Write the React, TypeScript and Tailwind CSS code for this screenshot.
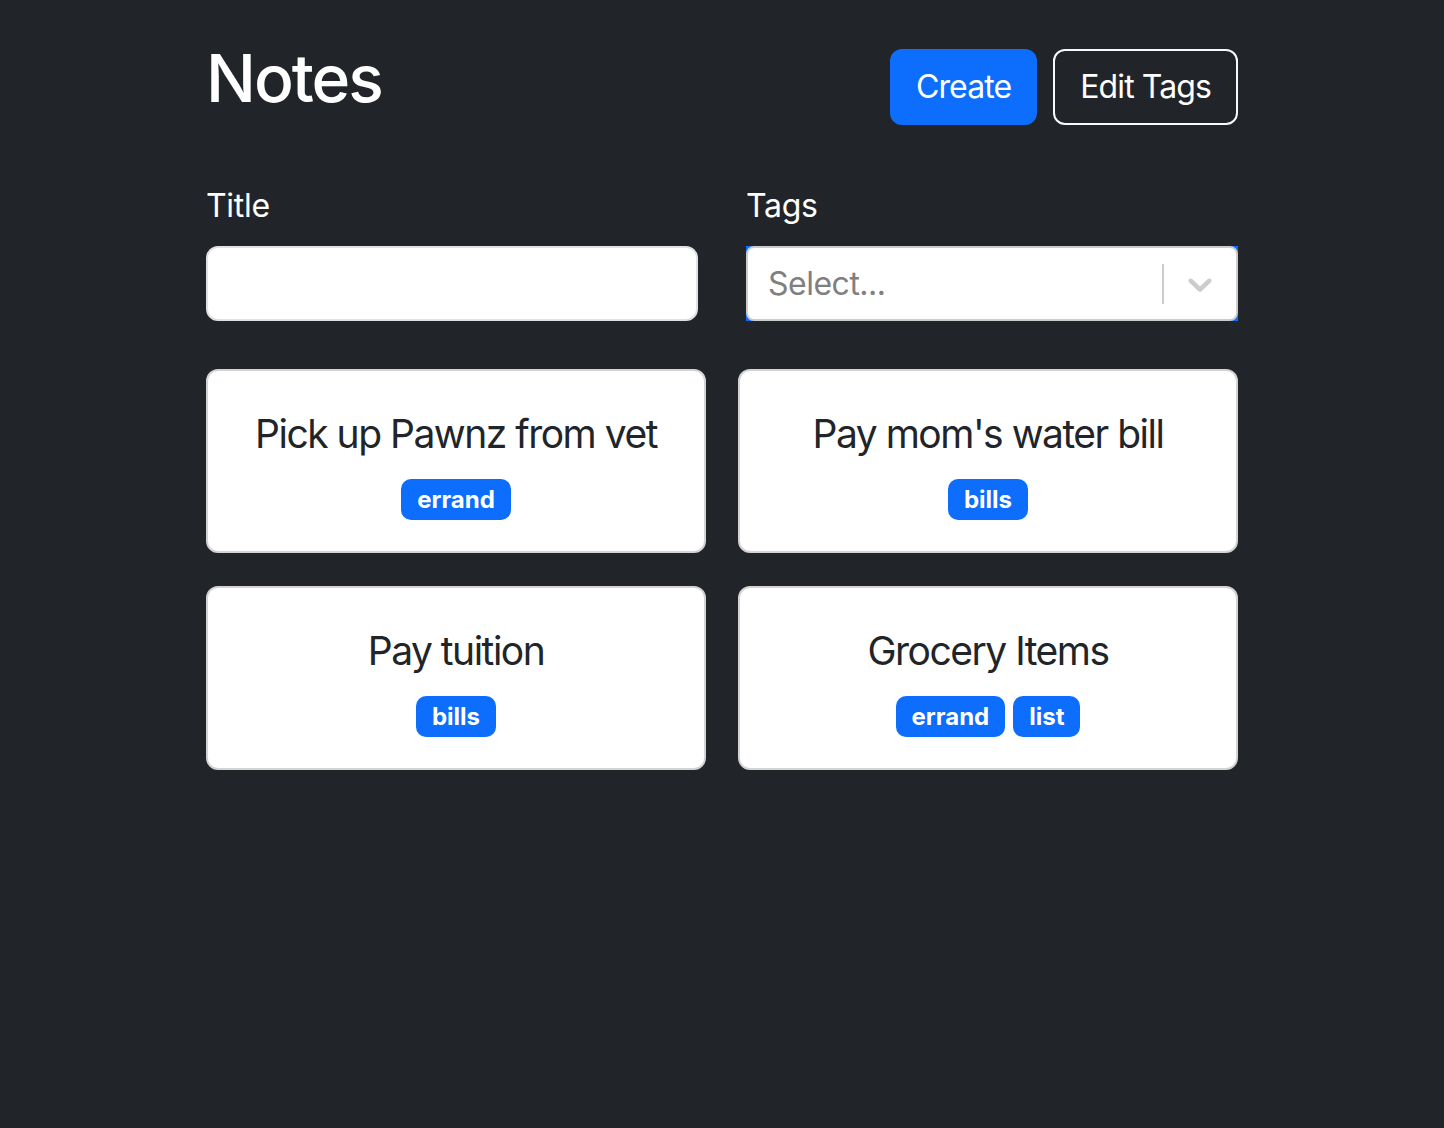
import React from "react";

const notes = [
  { title: "Pick up Pawnz from vet", tags: ["errand"] },
  { title: "Pay mom's water bill", tags: ["bills"] },
  { title: "Pay tuition", tags: ["bills"] },
  { title: "Grocery Items", tags: ["errand", "list"] },
];

export default function App() {
  return (
    <div
      className="min-h-[1128px] w-full bg-[#212529] text-white"
      style={{ fontFamily: "Inter, 'Noto Sans', sans-serif" }}
    >
      <div className="mx-auto w-[1032px] pt-[39px]">
        <div className="flex items-center justify-between mb-[48px]">
          <h1 className="text-[66px] leading-[79px] font-medium mb-[16px] tracking-[-2px]">Notes</h1>
          <div className="flex gap-[16px]">
            <button className="h-[76px] px-[26px] rounded-[12px] bg-[#0d6efd] text-[32px] text-white tracking-[-0.9px]">
              Create
            </button>
            <button className="h-[76px] px-[25px] rounded-[12px] border-2 border-[#f8f9fa] text-[32px] text-white tracking-[-0.9px]">
              Edit Tags
            </button>
          </div>
        </div>

        <div className="grid grid-cols-2 gap-x-[48px] mb-[48px]">
          <div>
            <label className="block text-[32px] leading-[48px] mb-[16px] tracking-[-0.3px]">Title</label>
            <div className="h-[75px] rounded-[12px] border-2 border-[#dee2e6] bg-white" />
          </div>
          <div>
            <label className="block text-[32px] leading-[48px] mb-[16px] tracking-[-0.3px]">Tags</label>
            <div className="bg-[#0d6efd]">
              <div className="h-[75px] rounded-[8px] border-2 border-[#cccccc] bg-white flex items-center">
                <div className="flex-1 pl-[20px] text-[32px] text-[#808080] tracking-[-0.5px]">Select...</div>
                <div className="w-[2px] h-[40px] bg-[#cccccc]" />
                <div className="px-[16px] flex items-center">
                  <svg width="40" height="40" viewBox="0 0 20 20" fill="#cccccc">
                    <path d="M4.516 7.548c0.436-0.446 1.043-0.481 1.576 0l3.908 3.747 3.908-3.747c0.533-0.481 1.141-0.446 1.574 0 0.436 0.445 0.408 1.197 0 1.615-0.406 0.418-4.695 4.502-4.695 4.502-0.217 0.223-0.502 0.335-0.787 0.335s-0.57-0.112-0.789-0.335c0 0-4.287-4.084-4.695-4.502s-0.436-1.17 0-1.615z" />
                  </svg>
                </div>
              </div>
            </div>
          </div>
        </div>

        <div className="grid grid-cols-2 gap-x-[32px] gap-y-[33px]">
          {notes.map((n) => (
            <div
              key={n.title}
              className="h-[184px] rounded-[12px] border-2 border-[#d3d3d3] bg-white flex flex-col items-center pt-[39px]"
            >
              <div className="text-[39px] leading-[48px] text-[#212529] tracking-[-1.5px]">{n.title}</div>
              <div className="flex gap-[8px] mt-[21px]">
                {n.tags.map((t) => (
                  <span
                    key={t}
                    className="h-[41px] px-[16px] rounded-[10px] bg-[#0d6efd] text-white text-[24px] font-bold leading-[41px]"
                  >
                    {t}
                  </span>
                ))}
              </div>
            </div>
          ))}
        </div>
      </div>
    </div>
  );
}
